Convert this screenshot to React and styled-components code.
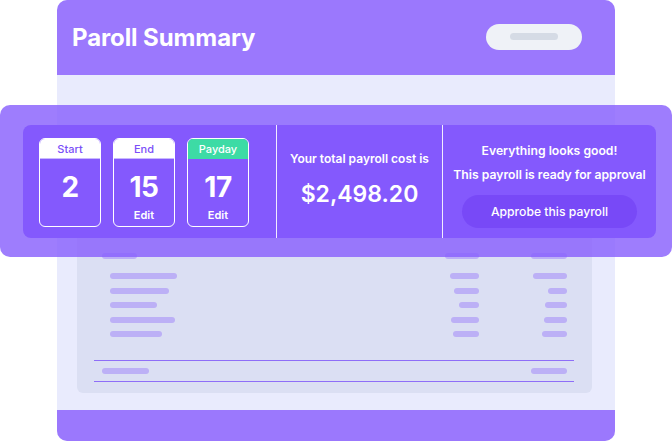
import React from "react";
import styled, { createGlobalStyle } from "styled-components";

const Global = createGlobalStyle`
  html, body {
    margin: 0;
    padding: 0;
    background: #ffffff;
  }
  body {
    font-family: "Inter", "Liberation Sans", sans-serif;
  }
`;

const Stage = styled.div`
  position: relative;
  width: 672px;
  height: 443px;
  overflow: hidden;
`;

const Card = styled.div`
  margin-left: 57px;
  width: 558px;
  height: 441px;
  border-radius: 10px;
  overflow: hidden;
  display: flex;
  flex-direction: column;
  background-color: #e9ebfd;
`;

const Header = styled.div`
  height: 75px;
  background-color: #9b78fd;
  display: flex;
  align-items: center;
  justify-content: space-between;
  padding: 0 33px 0 15px;
`;

const Title = styled.div`
  color: #ffffff;
  font-size: 24px;
  font-weight: 700;
  letter-spacing: -0.1px;
  margin-top: -1px;
`;

const Pill = styled.div`
  width: 96px;
  height: 26px;
  border-radius: 13px;
  background-color: #eff2f7;
  display: flex;
  align-items: center;
  justify-content: center;
  margin-top: -2px;
`;

const PillBar = styled.div`
  width: 48px;
  height: 7px;
  border-radius: 4px;
  background-color: #d5dbe5;
`;

const Body = styled.div`
  flex: 1;
  padding: 55px 23px 17px 20px;
  display: flex;
`;

const Footer = styled.div`
  height: 31px;
  background-color: #9b78fd;
`;

const Table = styled.div`
  flex: 1;
  background-color: #dbdff3;
  border-radius: 6px;
  padding: 121px 18px 0 17px;
  display: flex;
  flex-direction: column;
`;

const Row = styled.div`
  height: ${(p) => p.$h}px;
  display: flex;
  align-items: center;
  padding: 0 7px 0 8px;
`;

const LeftCell = styled.div`
  flex: 1;
  display: flex;
  padding-left: ${(p) => p.$indent || 0}px;
`;

const NumCell = styled.div`
  width: ${(p) => p.$w}px;
  display: flex;
  justify-content: flex-end;
`;

const Bar = styled.div`
  height: 6px;
  border-radius: 3px;
  background-color: #bcb0f6;
`;

const Rule = styled.div`
  height: 1px;
  background-color: #8e6ef8;
  margin-top: ${(p) => p.$mt || 0}px;
`;

const Overlay = styled.div`
  position: absolute;
  left: 0;
  top: 105px;
  width: 672px;
  height: 152px;
  border-radius: 10px;
  background-color: rgba(137, 96, 252, 0.82);
  padding: 20px 16px 19px 23px;
  box-sizing: border-box;
  display: flex;
`;

const Inner = styled.div`
  flex: 1;
  border-radius: 8px;
  background-color: #8459fd;
  display: flex;
`;

const Dates = styled.div`
  width: 254px;
  padding: 13px 0 0 16px;
  box-sizing: border-box;
  display: flex;
  gap: 12px;
  border-right: 1px solid #f1ecff;
`;

const DateCard = styled.div`
  width: 62px;
  height: 89px;
  box-sizing: border-box;
  border: 1.5px solid #ffffff;
  border-radius: 6px;
  overflow: hidden;
  display: flex;
  flex-direction: column;
`;

const DateLabel = styled.div`
  height: 19px;
  background-color: ${(p) => (p.$green ? "#3ddba5" : "#ffffff")};
  color: ${(p) => (p.$green ? "#ffffff" : "#7b4ff8")};
  border-bottom: 1px solid ${(p) => (p.$green ? "#3ddba5" : "#c9b8ff")};
  font-size: 11px;
  font-weight: 500;
  display: flex;
  align-items: center;
  justify-content: center;
`;

const DateBody = styled.div`
  flex: 1;
  display: flex;
  flex-direction: column;
  align-items: center;
  color: #ffffff;
`;

const DateNum = styled.div`
  font-size: 28px;
  font-weight: 700;
  margin-top: 13px;
  line-height: 30px;
  letter-spacing: -0.5px;
`;

const Edit = styled.div`
  font-size: 11px;
  font-weight: 600;
  margin-top: 6px;
`;

const Total = styled.div`
  width: 166px;
  border-right: 1px solid #f1ecff;
  display: flex;
  flex-direction: column;
  align-items: center;
  color: #ffffff;
  padding-top: 26px;
  box-sizing: border-box;
`;

const TotalLabel = styled.div`
  font-size: 12px;
  font-weight: 600;
`;

const Amount = styled.div`
  font-size: 23px;
  font-weight: 600;
  margin-top: 14px;
`;

const Approval = styled.div`
  flex: 1;
  display: flex;
  flex-direction: column;
  align-items: center;
  color: #ffffff;
  padding-top: 18px;
`;

const Line = styled.div`
  font-size: 12.2px;
  font-weight: 600;
  margin-bottom: ${(p) => p.$mb || 0}px;
`;

const Button = styled.div`
  margin-top: 13px;
  width: 175px;
  height: 33px;
  border-radius: 17px;
  background-color: #7849f7;
  display: flex;
  align-items: center;
  justify-content: center;
  font-size: 12.2px;
  font-weight: 500;
`;

const items = [
  [67, 29, 34],
  [59, 25, 19],
  [47, 20, 22],
  [65, 28, 23],
  [52, 26, 25],
];

const dates = [
  { label: "Start", num: "2" },
  { label: "End", num: "15", edit: true },
  { label: "Payday", num: "17", edit: true, green: true },
];

const App = () => {
  return (
    <Stage>
      <Global />
      <Card>
        <Header>
          <Title>Paroll Summary</Title>
          <Pill>
            <PillBar />
          </Pill>
        </Header>
        <Body>
          <Table>
            <Row $h={10}>
              <LeftCell>
                <Bar style={{ width: 35 }} />
              </LeftCell>
              <NumCell $w={88}>
                <Bar style={{ width: 34 }} />
              </NumCell>
              <NumCell $w={88}>
                <Bar style={{ width: 36 }} />
              </NumCell>
            </Row>
            <Row $h={8} />
            {items.map((it, i) => (
              <Row key={i} $h={14.5}>
                <LeftCell $indent={8}>
                  <Bar style={{ width: it[0] }} />
                </LeftCell>
                <NumCell $w={88}>
                  <Bar style={{ width: it[1] }} />
                </NumCell>
                <NumCell $w={88}>
                  <Bar style={{ width: it[2] }} />
                </NumCell>
              </Row>
            ))}
            <Rule $mt={18} />
            <Row $h={20}>
              <LeftCell>
                <Bar style={{ width: 47 }} />
              </LeftCell>
              <NumCell $w={88}>
                <Bar style={{ width: 36 }} />
              </NumCell>
            </Row>
            <Rule />
          </Table>
        </Body>
        <Footer />
      </Card>
      <Overlay>
        <Inner>
          <Dates>
            {dates.map((d) => (
              <DateCard key={d.label}>
                <DateLabel $green={d.green}>{d.label}</DateLabel>
                <DateBody>
                  <DateNum>{d.num}</DateNum>
                  {d.edit && <Edit>Edit</Edit>}
                </DateBody>
              </DateCard>
            ))}
          </Dates>
          <Total>
            <TotalLabel>Your total payroll cost is</TotalLabel>
            <Amount>$2,498.20</Amount>
          </Total>
          <Approval>
            <Line $mb={9}>Everything looks good!</Line>
            <Line>This payroll is ready for approval</Line>
            <Button>Approbe this payroll</Button>
          </Approval>
        </Inner>
      </Overlay>
    </Stage>
  );
};

export default App;
